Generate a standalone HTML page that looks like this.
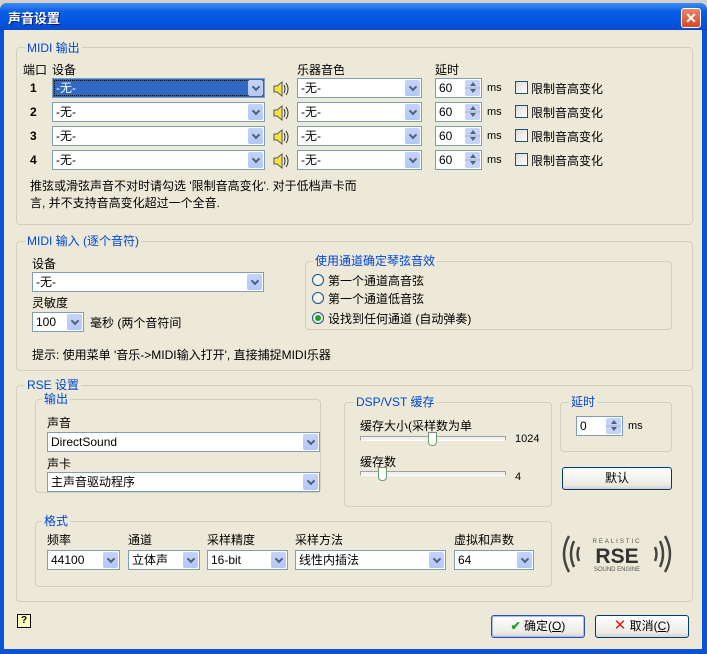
<!DOCTYPE html>
<html><head><meta charset="utf-8">
<style>
*{box-sizing:border-box;margin:0;padding:0}
body{width:707px;height:654px;overflow:hidden;background:#d4d0c8;font:12px "Liberation Sans","Noto Sans CJK SC",sans-serif;color:#000;position:relative}
.a{position:absolute;white-space:nowrap}
.win{left:0;top:3px;width:707px;height:651px;background:#0a52d8;border-radius:7px 7px 0 0}
.title{left:0;top:3px;width:707px;height:28px;border-radius:7px 7px 0 0;background:linear-gradient(#3d8cf5,#0a5fe6 30%,#0454e0 70%,#0a48c8)}
.client{left:4px;top:30px;width:698px;height:619px;background:#ece9d8}
.gb{position:absolute;border:1px solid #d0d0bf;border-radius:4px}
.gl{position:absolute;background:#ece9d8;color:#0046d5;padding:0 2px;line-height:14px}
.cb{position:absolute;height:20px;background:#fff;border:1px solid #7f9db9;padding-left:3px;line-height:18px}
.cb:after{content:"";position:absolute;right:1px;top:1px;width:15px;height:16px;background:linear-gradient(#c6d3f7,#b4c8f5);border-radius:2px}
.cb i{position:absolute;right:5px;top:5px;width:6px;height:6px;border-right:2px solid #4d6185;border-bottom:2px solid #4d6185;transform:rotate(45deg);z-index:2}
.sel{background:#316ac5;color:#fff;outline:1px dotted #000;outline-offset:-3px}
.sp{position:absolute;height:20px;width:47px;background:#fff;border:1px solid #7f9db9;padding-left:3px;line-height:18px}
.sp:after{content:"";position:absolute;right:1px;top:1px;width:15px;height:16px;background:linear-gradient(#c6d3f7 45%,#8fa7dd 50%,#c6d3f7 55%);border-radius:2px}
.sp b,.sp s{position:absolute;right:5px;width:0;height:0;border-left:3px solid transparent;border-right:3px solid transparent;z-index:2}
.sp b{top:3px;border-bottom:4px solid #4d6185}
.sp s{top:10px;border-top:4px solid #4d6185}
.ck{position:absolute;width:13px;height:13px;border:1px solid #1c5180;background:linear-gradient(135deg,#dcdcd7,#fff)}
.rd{position:absolute;width:12px;height:12px;border:1px solid #1c5180;border-radius:50%;background:#f4f4f0}
.btn{position:absolute;border:1px solid #003c74;border-radius:3px;background:linear-gradient(#fff,#ecebe6 80%,#d6d0c5);text-align:center;line-height:20px}
.tr{position:absolute;height:5px;border:1px solid #a0a0a0;border-bottom-color:#fff;background:#f0f0ec}
.th{position:absolute;width:9px;height:14px;border:1px solid #6a9a6a;border-radius:0 0 4px 4px;background:#fff;border-top:1px solid #888}
</style></head><body>
<div class="a win"></div>
<div class="a title"></div>
<div class="a" style="left:8px;top:8px;color:#fff;font-weight:bold;font-size:13px;text-shadow:1px 1px #0a1e6e">声音设置</div>
<div class="a" style="left:681px;top:8px;width:20px;height:20px;border:1px solid #fff;border-radius:3px;background:linear-gradient(#e8866e,#d44a24);color:#fff;font-weight:bold;text-align:center;line-height:18px;font-size:14px">✕</div>
<div class="a client"></div>

<div class="gb" style="left:16px;top:47px;width:677px;height:178px"></div>
<div class="gl" style="left:25px;top:41px">MIDI 输出</div>
<div class="a" style="left:23px;top:61px;width:26px;overflow:hidden">端口</div><div class="a" style="left:52px;top:61px">设备</div>
<div class="a" style="left:297px;top:61px;width:47px;overflow:hidden">乐器音色</div><div class="a" style="left:435px;top:61px">延时</div>

<div class="a" style="left:30px;top:81px;font-weight:bold">1</div>
<div class="cb sel" style="left:52px;top:78px;width:213px">-无-<i></i></div>
<div class="a" style="left:30px;top:105px;font-weight:bold">2</div>
<div class="cb" style="left:52px;top:102px;width:213px">-无-<i></i></div>
<div class="a" style="left:30px;top:129px;font-weight:bold">3</div>
<div class="cb" style="left:52px;top:126px;width:213px">-无-<i></i></div>
<div class="a" style="left:30px;top:153px;font-weight:bold">4</div>
<div class="cb" style="left:52px;top:150px;width:213px">-无-<i></i></div>

<svg class="a" style="left:272px;top:80px" width="18" height="90">
<g id="spk"><path d="M2 6h3l5-4v14l-5-4H2z" fill="#f2e440" stroke="#555"/><path d="M12 5q2 4 0 8M14 3q4 6 0 12" fill="none" stroke="#333"/></g>
<use href="#spk" y="24"/><use href="#spk" y="48"/><use href="#spk" y="72"/></svg>

<div class="cb" style="left:297px;top:78px;width:125px">-无-<i></i></div>
<div class="cb" style="left:297px;top:102px;width:125px">-无-<i></i></div>
<div class="cb" style="left:297px;top:126px;width:125px">-无-<i></i></div>
<div class="cb" style="left:297px;top:150px;width:125px">-无-<i></i></div>
<div class="sp" style="left:435px;top:78px">60<b></b><s></s></div>
<div class="sp" style="left:435px;top:102px">60<b></b><s></s></div>
<div class="sp" style="left:435px;top:126px">60<b></b><s></s></div>
<div class="sp" style="left:435px;top:150px">60<b></b><s></s></div>
<div class="a" style="left:487px;top:82px;font-size:11px">ms</div>
<div class="a" style="left:487px;top:106px;font-size:11px">ms</div>
<div class="a" style="left:487px;top:130px;font-size:11px">ms</div>
<div class="a" style="left:487px;top:154px;font-size:11px">ms</div>
<div class="ck" style="left:515px;top:81px"></div><div class="a" style="left:531px;top:80px">限制音高变化</div>
<div class="ck" style="left:515px;top:105px"></div><div class="a" style="left:531px;top:104px">限制音高变化</div>
<div class="ck" style="left:515px;top:129px"></div><div class="a" style="left:531px;top:128px">限制音高变化</div>
<div class="ck" style="left:515px;top:153px"></div><div class="a" style="left:531px;top:152px">限制音高变化</div>
<div class="a" style="left:30px;top:178px;line-height:17px">推弦或滑弦声音不对时请勾选 '限制音高变化'. 对于低档声卡而<br>言, 并不支持音高变化超过一个全音.</div>

<div class="gb" style="left:16px;top:241px;width:677px;height:130px"></div>
<div class="gl" style="left:25px;top:234px">MIDI 输入 (逐个音符)</div>
<div class="a" style="left:32px;top:255px">设备</div>
<div class="cb" style="left:32px;top:272px;width:232px">-无-<i></i></div>
<div class="a" style="left:32px;top:294px;width:36px;overflow:hidden">灵敏度</div>
<div class="cb" style="left:32px;top:312px;width:52px">100<i></i></div>
<div class="a" style="left:90px;top:314px">毫秒 (两个音符间</div>
<div class="gb" style="left:305px;top:261px;width:367px;height:69px"></div>
<div class="gl" style="left:313px;top:254px">使用通道确定琴弦音效</div>
<div class="rd" style="left:312px;top:274px"></div><div class="a" style="left:328px;top:272px">第一个通道高音弦</div>
<div class="rd" style="left:312px;top:292px"></div><div class="a" style="left:328px;top:290px">第一个通道低音弦</div>
<div class="rd" style="left:312px;top:312px"></div><div class="a" style="left:315px;top:315px;width:6px;height:6px;border-radius:50%;background:#21a121"></div><div class="a" style="left:328px;top:310px">设找到任何通道 (自动弹奏)</div>
<div class="a" style="left:32px;top:346px;width:310px;overflow:hidden">提示: 使用菜单 '音乐->MIDI输入打开', 直接捕捉MIDI乐器</div>

<div class="gb" style="left:16px;top:385px;width:677px;height:217px"></div>
<div class="gl" style="left:25px;top:378px">RSE 设置</div>
<div class="gb" style="left:35px;top:399px;width:286px;height:94px"></div>
<div class="gl" style="left:42px;top:392px">输出</div>
<div class="a" style="left:47px;top:414px">声音</div>
<div class="cb" style="left:47px;top:432px;width:273px">DirectSound<i></i></div>
<div class="a" style="left:47px;top:455px">声卡</div>
<div class="cb" style="left:47px;top:472px;width:273px">主声音驱动程序<i></i></div>

<div class="gb" style="left:344px;top:402px;width:208px;height:105px"></div>
<div class="gl" style="left:354px;top:395px">DSP/VST 缓存</div>
<div class="a" style="left:360px;top:417px;width:128px;overflow:hidden">缓存大小(采样数为单</div>
<div class="tr" style="left:360px;top:436px;width:146px"></div>
<div class="th" style="left:428px;top:432px"></div>
<div class="a" style="left:515px;top:433px;font-size:11px">1024</div>
<div class="a" style="left:360px;top:453px">缓存数</div>
<div class="tr" style="left:360px;top:471px;width:146px"></div>
<div class="th" style="left:378px;top:467px"></div>
<div class="a" style="left:515px;top:471px;font-size:11px">4</div>

<div class="gb" style="left:560px;top:402px;width:112px;height:50px"></div>
<div class="gl" style="left:569px;top:395px">延时</div>
<div class="sp" style="left:576px;top:416px">0<b></b><s></s></div>
<div class="a" style="left:628px;top:420px;font-size:11px">ms</div>
<div class="btn" style="left:562px;top:467px;width:110px;height:23px">默认</div>

<div class="gb" style="left:35px;top:521px;width:517px;height:66px"></div>
<div class="gl" style="left:42px;top:514px">格式</div>
<div class="a" style="left:47px;top:531px">频率</div>
<div class="a" style="left:128px;top:531px">通道</div>
<div class="a" style="left:207px;top:531px;width:50px;overflow:hidden">采样精度</div>
<div class="a" style="left:295px;top:531px;width:50px;overflow:hidden">采样方法</div>
<div class="a" style="left:454px;top:531px;width:64px;overflow:hidden">虚拟和声数</div>
<div class="cb" style="left:47px;top:550px;width:73px">44100<i></i></div>
<div class="cb" style="left:128px;top:550px;width:72px">立体声<i></i></div>
<div class="cb" style="left:207px;top:550px;width:81px">16-bit<i></i></div>
<div class="cb" style="left:295px;top:550px;width:151px">线性内插法<i></i></div>
<div class="cb" style="left:454px;top:550px;width:80px">64<i></i></div>

<svg class="a" style="left:560px;top:533px" width="114" height="42">
<path d="M9 3q-10 18 0 36M14 8q-6 13 0 26M19 14q-3 7 0 14" fill="none" stroke="#444" stroke-width="2.5"/>
<path d="M105 3q10 18 0 36M100 8q6 13 0 26M95 14q3 7 0 14" fill="none" stroke="#444" stroke-width="2.5"/>
<text x="57" y="10" font-size="6" text-anchor="middle" fill="#555" font-family="Liberation Sans" letter-spacing="2">REALISTIC</text>
<text x="57" y="30" font-size="21" font-weight="bold" text-anchor="middle" fill="#333" font-family="Liberation Sans">RSE</text>
<text x="57" y="38" font-size="6" text-anchor="middle" fill="#555" font-family="Liberation Sans">SOUND ENGINE</text>
</svg>

<div class="a" style="left:17px;top:614px;width:14px;height:14px;border:1px solid #000;background:#ffffc0;font-size:10px;font-weight:bold;text-align:center;line-height:12px">?</div>
<div class="btn" style="left:491px;top:615px;width:94px;height:23px;border-color:#2b4fb5;box-shadow:inset 0 0 0 1px #a8c0f0"><span style="color:#21a121;font-weight:bold">✔</span> 确定(<u>O</u>)</div>
<div class="btn" style="left:595px;top:615px;width:94px;height:23px"><span style="color:#e0201a;font-size:15px">✕</span> 取消(<u>C</u>)</div>
</body></html>
